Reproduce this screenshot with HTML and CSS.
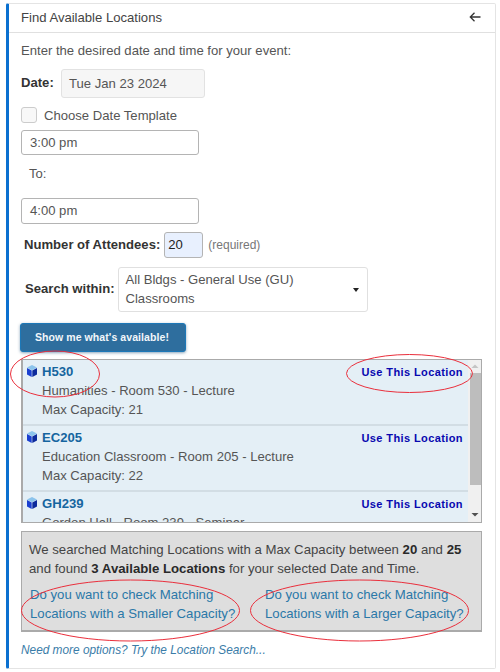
FILE: index.html
```html
<!DOCTYPE html>
<html lang="en">
<head>
<meta charset="utf-8">
<title>Find Available Locations</title>
<link rel="stylesheet" href="styles.css">
</head>
<body>
<div class="page">
  <section class="panel">
    <header class="panel-head">
      <span>Find Available Locations</span>
      <svg class="back" width="12" height="12" viewBox="0 0 12 12"><path d="M11.5 6H1.5M5.5 1.8 1.3 6l4.2 4.2" fill="none" stroke="#333" stroke-width="1.3"/></svg>
    </header>
    <div class="panel-body">
      <p class="intro">Enter the desired date and time for your event:</p>
      <div class="date-row">
        <label class="strong">Date:</label>
        <div class="date-box">Tue Jan 23 2024</div>
      </div>
      <div class="check-row"><span class="check"></span><span>Choose Date Template</span></div>
      <div class="time-box">3:00 pm</div>
      <div class="to">To:</div>
      <div class="time-box">4:00 pm</div>
      <div class="att-row">
        <label class="strong">Number of Attendees:</label>
        <div class="att-box">20</div>
        <span class="req">(required)</span>
      </div>
      <div class="search-row">
        <label class="strong">Search within:</label>
        <div class="select">
          <span>All Bldgs - General Use (GU) Classrooms</span>
          <i class="caret"></i>
        </div>
      </div>
      <button class="go" type="button">Show me what's available!</button>

      <div class="results">
        <div class="list">
          <article class="item">
            <div class="item-top">
              <span class="room"><svg class="cube" viewBox="0 0 10 12"><path d="M5 0 10 2.6 5 5.2 0 2.6Z" fill="#8cc4ec"/><path d="M0 3 4.7 5.5V12L0 9.4Z" fill="#1a3fd0"/><path d="M10 3 5.3 5.5V12L10 9.4Z" fill="#0c2a9c"/></svg>H530</span>
              <a class="use">Use This Location</a>
            </div>
            <div class="line">Humanities - Room 530 - Lecture</div>
            <div class="line">Max Capacity: 21</div>
          </article>
          <article class="item">
            <div class="item-top">
              <span class="room"><svg class="cube" viewBox="0 0 10 12"><path d="M5 0 10 2.6 5 5.2 0 2.6Z" fill="#8cc4ec"/><path d="M0 3 4.7 5.5V12L0 9.4Z" fill="#1a3fd0"/><path d="M10 3 5.3 5.5V12L10 9.4Z" fill="#0c2a9c"/></svg>EC205</span>
              <a class="use">Use This Location</a>
            </div>
            <div class="line">Education Classroom - Room 205 - Lecture</div>
            <div class="line">Max Capacity: 22</div>
          </article>
          <article class="item">
            <div class="item-top">
              <span class="room"><svg class="cube" viewBox="0 0 10 12"><path d="M5 0 10 2.6 5 5.2 0 2.6Z" fill="#8cc4ec"/><path d="M0 3 4.7 5.5V12L0 9.4Z" fill="#1a3fd0"/><path d="M10 3 5.3 5.5V12L10 9.4Z" fill="#0c2a9c"/></svg>GH239</span>
              <a class="use">Use This Location</a>
            </div>
            <div class="line">Gordon Hall - Room 239 - Seminar</div>
          </article>
        </div>
        <div class="scrollbar">
          <svg class="arrow" width="14" height="13" viewBox="0 0 14 13"><path d="M3.5 8 7 4.5 10.5 8Z" fill="#c4c4c4"/></svg>
          <div class="thumb"></div>
          <svg class="arrow arrow-end" width="14" height="13" viewBox="0 0 14 13"><path d="M3.5 5 7 8.5 10.5 5Z" fill="#505050"/></svg>
        </div>
      </div>

      <div class="summary">
        <p>We searched Matching Locations with a Max Capacity between <b>20</b> and <b>25</b> and found <b>3 Available Locations</b> for your selected Date and Time.</p>
        <div class="links">
          <a>Do you want to check Matching Locations with a Smaller Capacity?</a>
          <a>Do you want to check Matching Locations with a Larger Capacity?</a>
        </div>
      </div>
      <a class="more">Need more options? Try the Location Search...</a>
    </div>
  </section>
  <svg class="marks" width="500" height="672" viewBox="0 0 500 672">
    <ellipse cx="55" cy="374" rx="44.5" ry="23"/>
    <ellipse cx="409.5" cy="373.5" rx="63" ry="19"/>
    <ellipse cx="130.500" cy="610.500" rx="109" ry="30.500"/>
    <ellipse cx="359.500" cy="610.500" rx="109" ry="30.500"/>
  </svg>
</div>
</body>
</html>
```

FILE: styles.css
```css
* { box-sizing: border-box; }
html, body { margin: 0; padding: 0; }
body {
  background: #fff;
  font-family: "Liberation Sans", Arial, sans-serif;
  font-size: 13.100px;
  color: #555;
}
.page { position: relative; width: 500px; height: 672px; padding: 3px 4px 0 6px; overflow: hidden; }
.panel {
  width: 490px;
  height: 666px;
  background: #fff;
  border: 1px solid #e4e4e4;
  border-left: 3px solid #0a70d0;
  border-radius: 2px;
}
.panel-head {
  height: 29px;
  display: flex;
  align-items: center;
  justify-content: space-between;
  padding: 0 14px 2px 12px;
  color: #444;
  border-bottom: 1px solid #e0e0e0;
}
.panel-body { padding: 0 12px; }
.intro { margin: 0; padding-top: 9px; height: 36px; line-height: 17px; }
.strong { font-weight: bold; color: #333; }
.date-row { display: flex; align-items: center; gap: 9px; height: 29px; }
.date-row .strong { width: 31px; padding-bottom: 2px; }
.date-box {
  width: 144px; height: 29px; padding-left: 7px; line-height: 28px;
  background: #f6f6f6; border: 1px solid #e2e2e2; border-radius: 3px;
}
.check-row { display: flex; align-items: center; gap: 7px; margin-top: 9px; height: 16px; }
.check { width: 16px; height: 16px; background: #f8f8f8; border: 1px solid #ccc; border-radius: 3px; }
.time-box {
  width: 178px; height: 25px; margin-top: 7px; padding-left: 8px; line-height: 23px;
  border: 1px solid #b4b4b4; border-radius: 3px; background: #fff;
}
.to { height: 36px; margin-top: 7px; padding: 1px 0 0 8px; line-height: 22px; }
.to + .time-box { margin-top: 0; height: 26px; line-height: 24px; }
.att-row { display: flex; align-items: center; height: 26px; margin-top: 8px; padding: 0 0 1px 3px; }
.att-box {
  width: 39px; height: 26px; margin-left: 4px; padding-left: 3px; line-height: 24px;
  color: #222; background: #e8f0fe; border: 1px solid #b4b4b4; border-radius: 3px;
}
.req { margin-left: 5px; font-size: 12px; color: #777; }
.search-row { display: flex; align-items: center; gap: 3px; height: 45px; margin-top: 9px; padding-left: 4px; }
.search-row .strong { padding-bottom: 2px; }
.select {
  position: relative; width: 250px; height: 45px; padding: 2px 40px 0 7px; line-height: 19px;
  background: #fff; border: 1px solid #e0e0e0; border-radius: 3px;
}
.caret {
  position: absolute; right: 8px; top: 20px; width: 0; height: 0;
  border-left: 3.5px solid transparent; border-right: 3.500px solid transparent; border-top: 4px solid #222;
}
.go {
  display: block; width: 166px; height: 29px; margin: 11px 0 0 -1px; padding: 0 2px 2px 0;
  font: bold 10.500px "Liberation Sans", Arial, sans-serif; letter-spacing: .08px; color: #f2f6fa;
  background: #2e6e9e; border: 1px solid #1c78b8; border-radius: 3px; box-shadow: 0 1px 3px rgba(40,90,130,.55);
}
.results {
  display: flex; width: 461px; height: 164px; margin-top: 7px; overflow: hidden;
  background: #f0f0f0; border: 1px solid #aaa; border-left-width: 2px;
}
.list { width: 445px; flex: none; height: 162px; overflow: hidden; }
.item { height: 66px; padding: 2px 5px 0 4px; background: #e4eff6; border-bottom: 2px solid #d2dde4; }
.item-top { display: flex; justify-content: space-between; align-items: center; height: 19px; }
.room { display: flex; align-items: center; font-weight: bold; color: #15659f; }
.cube { width: 10px; height: 12px; margin: -2px 5px 0 0; }
.use { font-size: 11px; font-weight: bold; letter-spacing: .4px; color: #0808b0; }
.line { padding-left: 15px; height: 19px; line-height: 19px; }
.scrollbar { width: 14px; flex: none; display: flex; flex-direction: column; align-items: center; }
.arrow { flex: none; }
.arrow-end { margin-top: auto; margin-bottom: 1px; }
.thumb { width: 11px; height: 112px; background: #bdbdbd; }
.summary {
  width: 461px; height: 101px; margin-top: 8px; padding: 8px 7px;
  background: #dedede; border: 1px solid #aaa; border-bottom-width: 2px; border-right-width: 1px;
  font-size: 13.200px; line-height: 19px; color: #444;
}
.summary p { margin: 0; }
.summary b { color: #2a2a2a; }
.links { display: grid; grid-template-columns: 235px 210px; margin-top: 7px; padding-left: 1px; }
.links a { color: #2a78a8; }
.more { display: block; margin-top: 11px; font-size: 11.850px; font-style: italic; color: #3a7ca8; }
.marks { position: absolute; left: 0; top: 0; pointer-events: none; }
.marks ellipse { fill: none; stroke: #ea2f3c; stroke-width: 1; }
```
